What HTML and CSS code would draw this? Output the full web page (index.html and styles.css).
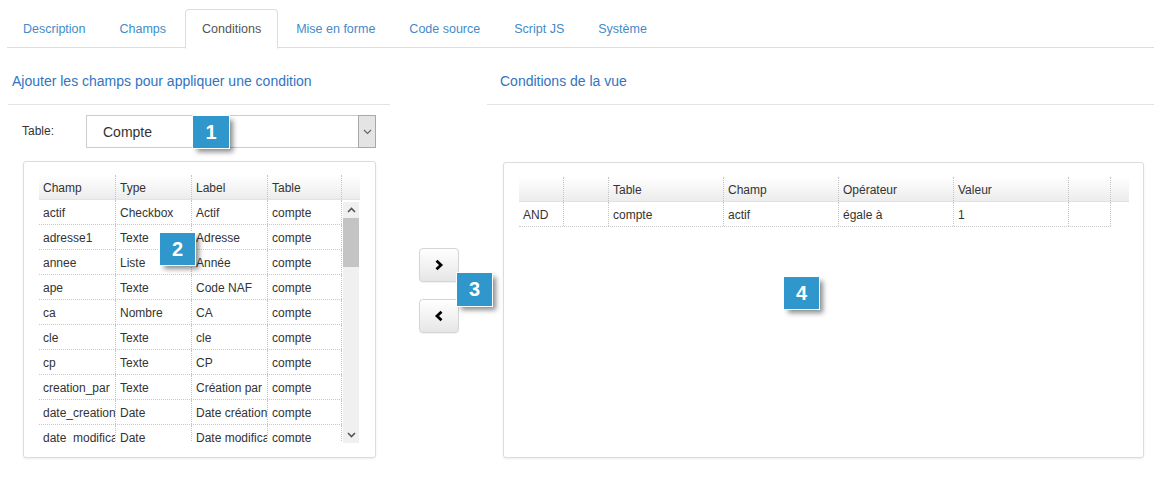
FILE: index.html
```html
<!DOCTYPE html>
<html lang="fr">
<head>
<meta charset="utf-8">
<title>Conditions de la vue</title>
<link rel="stylesheet" href="styles.css">
</head>
<body>
<div class="page">
  <ul class="tabs">
    <li><a>Description</a></li>
    <li><a>Champs</a></li>
    <li class="active"><a>Conditions</a></li>
    <li><a>Mise en forme</a></li>
    <li><a>Code source</a></li>
    <li><a>Script JS</a></li>
    <li><a>Système</a></li>
  </ul>

  <div class="cols">
    <section class="col-left">
      <h2 class="sect-title">Ajouter les champs pour appliquer une condition</h2>
      <div class="table-pick">
        <label class="pick-label">Table:</label>
        <div class="select">
          <span class="select-val">Compte</span>
          <span class="select-arrow">
            <svg width="9" height="6" viewBox="0 0 9 6"><polyline points="1,1 4.5,4.5 8,1" fill="none" stroke="#666" stroke-width="1.2"/></svg>
          </span>
        </div>
      </div>
      <div class="panel panel-left">
        <div class="lgrid">
          <div class="lrow lhead">
            <div class="c c1">Champ</div><div class="c c2">Type</div><div class="c c3">Label</div><div class="c c4">Table</div><div class="c cs"></div>
          </div>
          <div class="lbody">
            <div class="lrows">
              <div class="lrow"><div class="c c1">actif</div><div class="c c2">Checkbox</div><div class="c c3">Actif</div><div class="c c4">compte</div></div>
              <div class="lrow"><div class="c c1">adresse1</div><div class="c c2">Texte</div><div class="c c3">Adresse</div><div class="c c4">compte</div></div>
              <div class="lrow"><div class="c c1">annee</div><div class="c c2">Liste</div><div class="c c3">Année</div><div class="c c4">compte</div></div>
              <div class="lrow"><div class="c c1">ape</div><div class="c c2">Texte</div><div class="c c3">Code NAF</div><div class="c c4">compte</div></div>
              <div class="lrow"><div class="c c1">ca</div><div class="c c2">Nombre</div><div class="c c3">CA</div><div class="c c4">compte</div></div>
              <div class="lrow"><div class="c c1">cle</div><div class="c c2">Texte</div><div class="c c3">cle</div><div class="c c4">compte</div></div>
              <div class="lrow"><div class="c c1">cp</div><div class="c c2">Texte</div><div class="c c3">CP</div><div class="c c4">compte</div></div>
              <div class="lrow"><div class="c c1">creation_par</div><div class="c c2">Texte</div><div class="c c3">Création par</div><div class="c c4">compte</div></div>
              <div class="lrow"><div class="c c1">date_creation</div><div class="c c2">Date</div><div class="c c3">Date création</div><div class="c c4">compte</div></div>
              <div class="lrow"><div class="c c1">date_modification</div><div class="c c2">Date</div><div class="c c3">Date modification</div><div class="c c4">compte</div></div>
            </div>
            <div class="scrollbar">
              <div class="sb-arrow">
                <svg width="9" height="6" viewBox="0 0 9 6"><polyline points="1,5 4.5,1.5 8,5" fill="none" stroke="#555" stroke-width="1.6"/></svg>
              </div>
              <div class="sb-track"><div class="sb-thumb"></div></div>
              <div class="sb-arrow">
                <svg width="9" height="6" viewBox="0 0 9 6"><polyline points="1,1 4.5,4.5 8,1" fill="none" stroke="#555" stroke-width="1.6"/></svg>
              </div>
            </div>
          </div>
        </div>
      </div>
    </section>

    <section class="col-mid">
      <button class="mv-btn" type="button" aria-label="Ajouter">
        <svg width="10" height="12" viewBox="0 0 10 12"><polyline points="2.5,1.8 7,6 2.5,10.2" fill="none" stroke="#000" stroke-width="2.8" stroke-linejoin="miter"/></svg>
      </button>
      <button class="mv-btn" type="button" aria-label="Retirer">
        <svg width="10" height="12" viewBox="0 0 10 12"><polyline points="7.5,1.8 3,6 7.5,10.2" fill="none" stroke="#000" stroke-width="2.8" stroke-linejoin="miter"/></svg>
      </button>
    </section>

    <section class="col-right">
      <h2 class="sect-title sect-title-r">Conditions de la vue</h2>
      <div class="panel panel-right">
        <div class="rgrid">
          <div class="rrow rhead">
            <div class="c r1"></div><div class="c r2"></div><div class="c r3">Table</div><div class="c r4">Champ</div><div class="c r5">Opérateur</div><div class="c r6">Valeur</div><div class="c r7"></div><div class="rfill"></div>
          </div>
          <div class="rrow">
            <div class="c r1">AND</div><div class="c r2"></div><div class="c r3">compte</div><div class="c r4">actif</div><div class="c r5">égale à</div><div class="c r6">1</div><div class="c r7"></div>
          </div>
        </div>
      </div>
    </section>
  </div>

  <div class="badge b1">1</div>
  <div class="badge b2">2</div>
  <div class="badge b3">3</div>
  <div class="badge b4">4</div>
</div>
</body>
</html>
```

FILE: styles.css
```css
* { box-sizing: border-box; }

html, body {
  margin: 0;
  padding: 0;
  background: #fff;
}

body {
  font-family: "Liberation Sans", Arial, sans-serif;
  color: #333;
  font-size: 12px;
}

.page {
  position: relative;
  width: 1154px;
  height: 484px;
  padding-left: 8px;
  overflow: hidden;
}

/* ---------- tabs ---------- */
.tabs {
  list-style: none;
  margin: 9px 0 0 -1px;
  padding: 0;
  display: flex;
  border-bottom: 1px solid #ddd;
  height: 39px;
}

.tabs li {
  margin-right: 2px;
  margin-bottom: -1px;
}

.tabs li:nth-child(2) { margin-right: 3px; }

.tabs a {
  display: block;
  padding: 10px 15px;
  line-height: 18px;
  font-size: 12.5px;
  color: #428bca;
  border: 1px solid transparent;
  border-radius: 4px 4px 0 0;
  cursor: pointer;
}

.tabs li.active a {
  color: #555;
  background: #fff;
  border-color: #ddd #ddd transparent;
  padding-left: 16px;
  padding-right: 16px;
}

/* ---------- columns ---------- */
.cols {
  display: flex;
  align-items: flex-start;
}

.col-left { width: 382px; }
.col-mid {
  width: 97px;
  padding: 200px 0 0 29px;
  display: flex;
  flex-direction: column;
  gap: 17px;
}
.col-right { width: 667px; }

.sect-title {
  margin: 0;
  padding: 23px 4px 13px;
  font-size: 14px;
  line-height: 20px;
  font-weight: normal;
  color: #3174bf;
  border-bottom: 1px solid #e3e3e3;
}

.sect-title-r { padding-left: 13px; }

/* ---------- table picker ---------- */
.table-pick {
  display: flex;
  align-items: center;
  margin-top: 10px;
  padding-left: 14px;
}

.pick-label {
  width: 64px;
  font-size: 12px;
  color: #333;
  margin-top: -2px;
}

.select {
  width: 290px;
  height: 33px;
  border: 1px solid #ccc;
  display: flex;
  align-items: center;
  background: #fff;
}

.select-val {
  flex: 1;
  padding-left: 16px;
  font-size: 14px;
  color: #333;
}

.select-arrow {
  width: 18px;
  height: 33px;
  margin: -1px -1px -1px 0;
  border: 1px solid #a8a8a8;
  background: #e4e4e4;
  display: flex;
  align-items: center;
  justify-content: center;
}

/* ---------- panels ---------- */
.panel {
  border: 1px solid #dcdcdc;
  border-radius: 3px;
  background: #fff;
  box-shadow: 0 1px 2px rgba(0, 0, 0, 0.08);
}

.panel-left {
  margin: 13px 0 0 15px;
  width: 353px;
  height: 297px;
  padding: 13px 0 0 15px;
}

.panel-right {
  margin: 57px 0 0 16px;
  width: 641px;
  height: 296px;
  padding: 14px 0 0 15px;
}

/* cells */
.c {
  height: 100%;
  padding-left: 4px;
  padding-top: 1px;
  white-space: nowrap;
  overflow: hidden;
  border-right: 1px dotted #c4c4c4;
  display: flex;
  align-items: center;
  color: #333;
}

/* ---------- left grid ---------- */
.lgrid { width: 321px; }

.lrow {
  display: flex;
  height: 25px;
  border-bottom: 1px dotted #c8c8c8;
}

.lhead {
  background: linear-gradient(#ffffff, #ececec);
  border-bottom: 1px solid #e2e2e2;
}

.c1 { width: 77px; }
.c2 { width: 76px; }
.c3 { width: 76px; }
.c4 { width: 74px; }
.cs { width: 18px; border-right: none; }

.lbody {
  display: flex;
  height: 242px;
}

.lrows {
  width: 303px;
  height: 242px;
  overflow: hidden;
}

.scrollbar {
  width: 16px;
  margin-left: 1px;
  margin-top: 2px;
  height: 241px;
  background: #f0f0f0;
  display: flex;
  flex-direction: column;
}

.sb-arrow {
  height: 16px;
  display: flex;
  align-items: center;
  justify-content: center;
}

.sb-track {
  flex: 1;
}

.sb-thumb {
  height: 49px;
  background: #c4c4c4;
}

/* ---------- middle buttons ---------- */
.mv-btn {
  width: 40px;
  height: 34px;
  padding: 0;
  border: 1px solid #d4d4d4;
  border-radius: 4px;
  background: linear-gradient(#ffffff, #e6e6e6);
  display: flex;
  align-items: center;
  justify-content: center;
  box-shadow: 0 1px 1px rgba(0, 0, 0, 0.06);
  cursor: pointer;
}

/* ---------- right grid ---------- */
.rgrid { width: 610px; }

.rrow {
  display: flex;
  height: 25px;
  width: 592px;
  border-bottom: 1px dotted #c8c8c8;
}

.rhead {
  width: 610px;
  background: linear-gradient(#ffffff, #ececec);
  border-bottom: 1px solid #e2e2e2;
}

.r1 { width: 45px; }
.r2 { width: 45px; }
.r3, .r4, .r5, .r6 { width: 115px; }
.r7 { width: 42px; }
.rfill { width: 18px; }

/* ---------- numbered badges ---------- */
.badge {
  position: absolute;
  width: 36px;
  height: 32px;
  background: #2f97cb;
  color: #fff;
  font-weight: bold;
  font-size: 20px;
  display: flex;
  align-items: center;
  justify-content: center;
  box-shadow: 0 0 0 1px #fff, 4px 4px 5px rgba(0, 0, 0, 0.45);
}

.b1 { left: 193px; top: 116px; }
.b2 { left: 160px; top: 233px; width: 35px; }
.b3 { left: 457px; top: 273px; width: 35px; height: 33px; }
.b4 { left: 784px; top: 277px; width: 35px; }
```
